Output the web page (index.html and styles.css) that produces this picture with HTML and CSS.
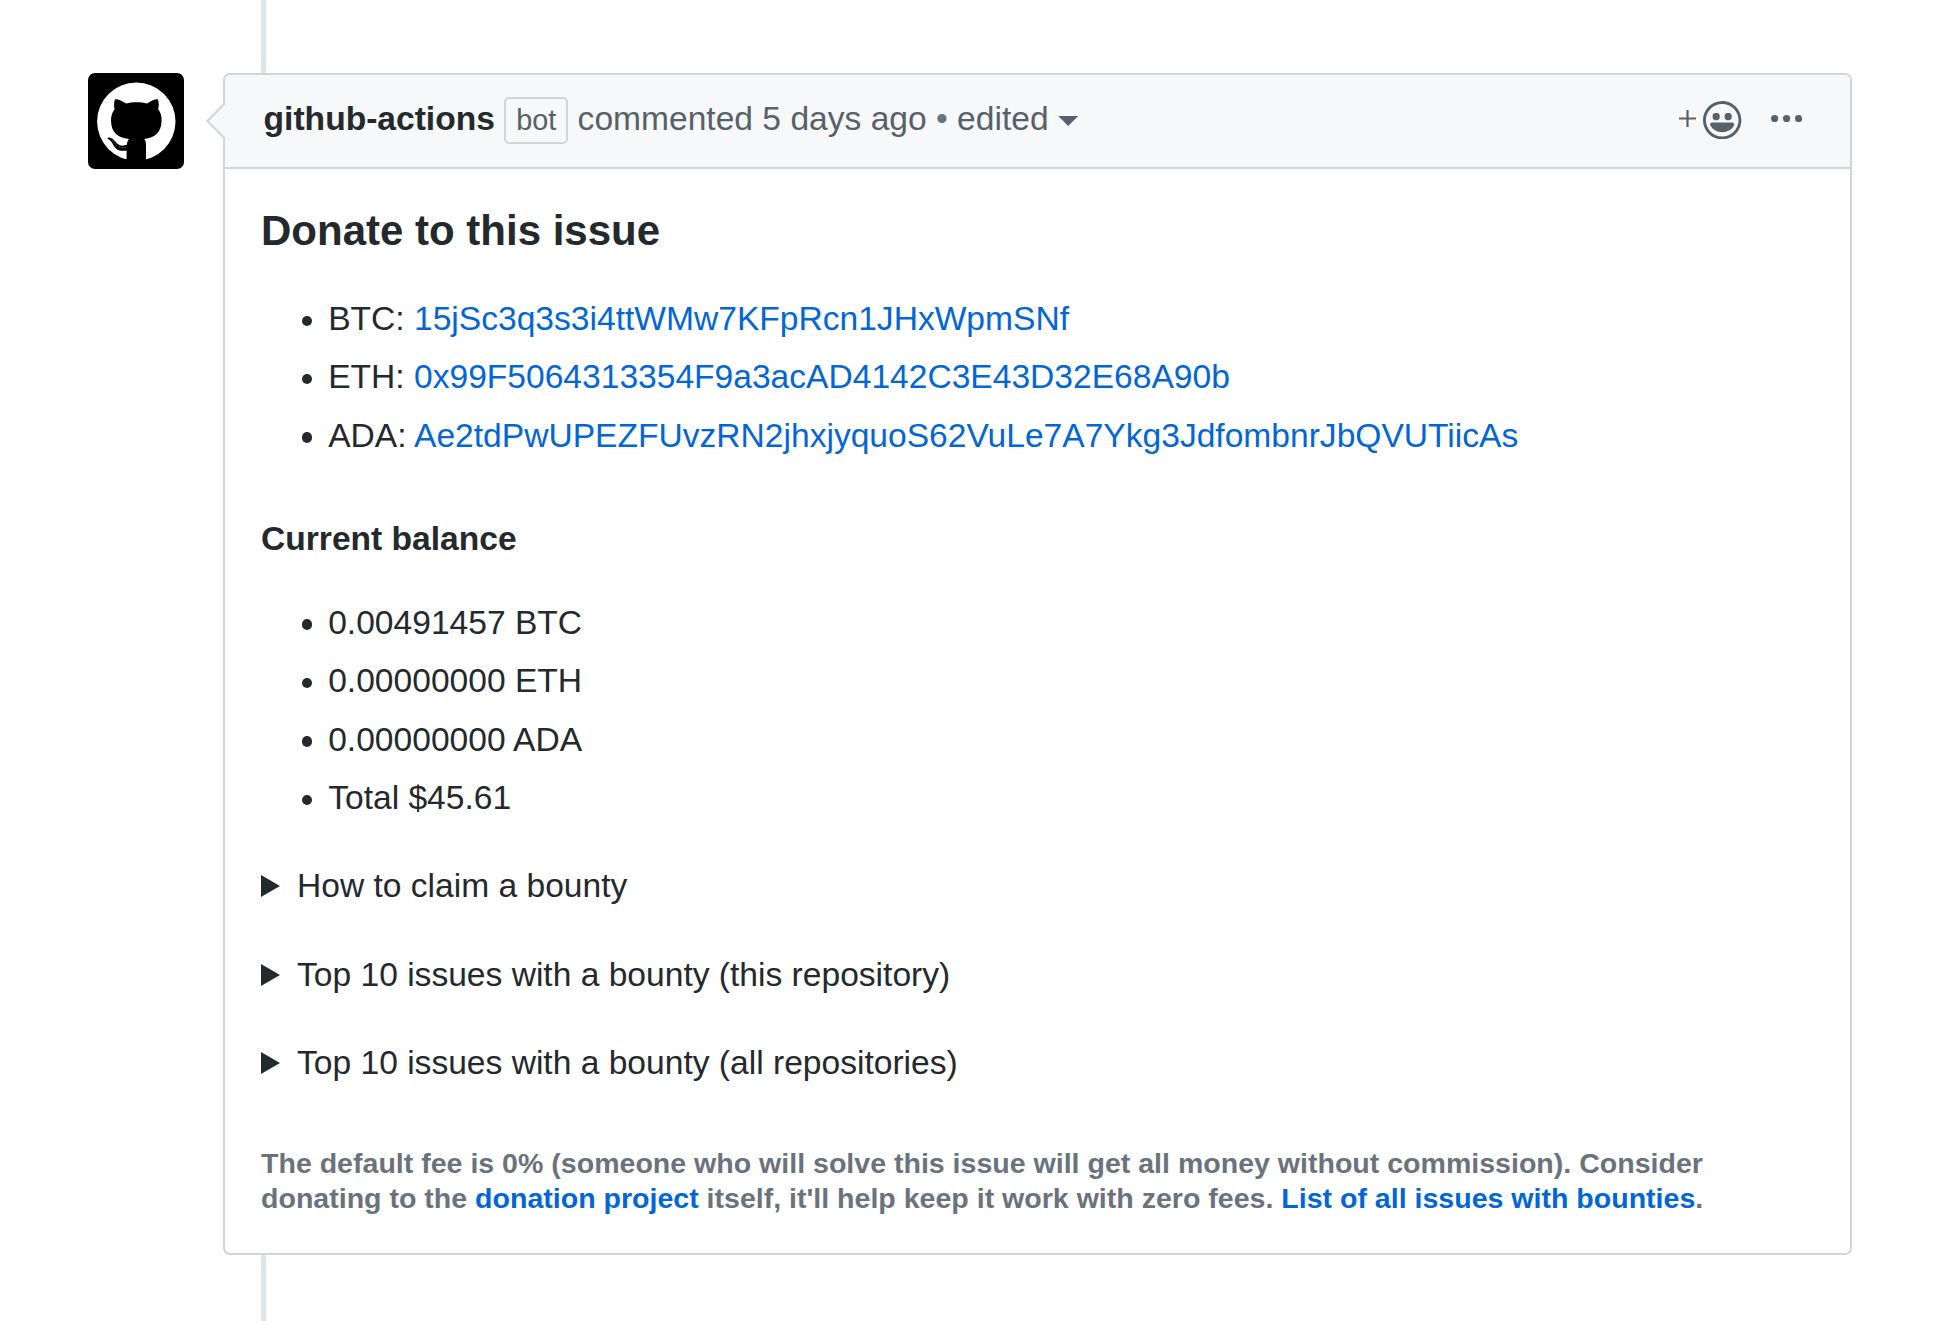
FILE: index.html
```html
<!DOCTYPE html>
<html lang="en">
<head>
<meta charset="utf-8">
<title>Issue comment</title>
<link rel="stylesheet" href="styles.css">
</head>
<body>
<main class="timeline">
  <a class="avatar" aria-label="github-actions">
    <svg viewBox="0 0 96 96" width="96" height="96">
      <rect width="96" height="96" fill="#000"/>
      <circle cx="48.3" cy="48.6" r="39.2" fill="#fff"/>
      <path d="M27 26.2C30.500 26 34.500 28 38 30.600C44.500 28.700 52.500 28.700 59 30.600C62.500 28 66.500 26 69.800 26.200C71 29.500 71 33 70.200 36.300C72.600 39.500 73.700 43 73.600 47.500C73.400 59.500 67 64.500 56.300 66C57.600 67.500 58 69.500 58 72V96H38.600V77.500C30.500 78.800 27.500 76 25.300 72C23.900 69.300 22.300 67.200 19.700 65.800C19.300 64.500 20.800 64.300 22.400 64.700C25.500 65.600 27.200 68.300 28.900 70.300C31.500 73.100 35 73.100 38.900 71.800C39.100 69.400 39.700 67.500 41 66C29.500 64.500 23.200 59.500 23 47.500C23 43 24.200 39.500 26.600 36.300C25.800 33 25.800 29.500 27 26.200Z" fill="#000"/>
      <path d="M24.500 67.500L28.500 72.600L33 74.500L38.500 74.500" fill="none" stroke="#aaa" stroke-width=".8" stroke-dasharray="1 2"/>
      <path d="M36 86.300H60V96H36Z" fill="#000"/>
    </svg>
  </a>
  <article class="comment">
    <svg class="comment-arrow" viewBox="0 0 20 38" width="20" height="38">
      <path d="M20 0L1.400 19L20 38Z" fill="#f6f8fa"/>
      <path d="M18.700 1.500L1.400 19L18.700 36.500" fill="none" stroke="#d1d5da" stroke-width="2"/>
    </svg>
    <header class="comment-header">
      <h3 class="comment-title"><strong class="author">github-actions</strong> <span class="label">bot</span> commented 5 days ago <span class="dot">•</span> edited<i class="caret"></i></h3>
      <div class="actions">
        <svg viewBox="0 0 17 17" width="17" height="17" class="plus"><path d="M8.500 0V17M0 8.500H17" stroke="currentColor" stroke-width="2.200"/></svg>
        <svg viewBox="0 0 16 16" width="38.4" height="38.4" class="smiley"><path fill="currentColor" fill-rule="evenodd" d="M8 0C3.580 0 0 3.580 0 8s3.580 8 8 8 8-3.580 8-8-3.580-8-8-8zm4.810 12.810a6.720 6.720 0 01-2.170 1.450c-.83.36-1.720.53-2.640.53-.92 0-1.810-.17-2.640-.53-.81-.34-1.550-.83-2.170-1.450a6.773 6.773 0 01-1.450-2.170A6.590 6.590 0 011.210 8c0-.92.17-1.810.53-2.640.34-.81.83-1.550 1.450-2.170.62-.62 1.360-1.110 2.170-1.450A6.590 6.590 0 018 1.210c.92 0 1.810.17 2.640.53.81.34 1.550.83 2.170 1.450.62.62 1.110 1.360 1.450 2.170.36.83.53 1.720.53 2.640 0 .92-.17 1.810-.53 2.640-.34.81-.83 1.550-1.450 2.170zM4 6.800v-.59c0-.66.53-1.190 1.200-1.190h.59c.66 0 1.190.53 1.190 1.190v.59c0 .67-.53 1.200-1.190 1.200H5.200C4.530 8 4 7.470 4 6.800zm5 0v-.59c0-.66.53-1.190 1.200-1.190h.59c.66 0 1.190.53 1.190 1.190v.59c0 .67-.53 1.200-1.190 1.200h-.59C9.530 8 9 7.470 9 6.800zm4 3.200c-.72 1.880-2.910 3-5 3s-4.280-1.130-5-3c-.14-.39.23-1 .66-1h8.590c.41 0 .89.61.75 1z"/></svg>
        <svg viewBox="0 0 13 3" width="31.200" height="7.200" class="kebab" fill="currentColor"><circle cx="1.500" cy="1.500" r="1.500"/><circle cx="6.500" cy="1.500" r="1.500"/><circle cx="11.500" cy="1.500" r="1.500"/></svg>
      </div>
    </header>
    <div class="comment-body">
      <h3 class="heading">Donate to this issue</h3>
      <ul class="list">
        <li>BTC: <a class="link">15jSc3q3s3i4ttWMw7KFpRcn1JHxWpmSNf</a></li>
        <li>ETH: <a class="link">0x99F5064313354F9a3acAD4142C3E43D32E68A90b</a></li>
        <li>ADA: <a class="link">Ae2tdPwUPEZFUvzRN2jhxjyquoS62VuLe7A7Ykg3JdfombnrJbQVUTiicAs</a></li>
      </ul>
      <h4 class="subheading">Current balance</h4>
      <ul class="list">
        <li>0.00491457 BTC</li>
        <li>0.00000000 ETH</li>
        <li>0.00000000 ADA</li>
        <li>Total $45.61</li>
      </ul>
      <details class="details"><summary>How to claim a bounty</summary></details>
      <details class="details"><summary>Top 10 issues with a bounty (this repository)</summary></details>
      <details class="details"><summary>Top 10 issues with a bounty (all repositories)</summary></details>
      <h6 class="note">The default fee is 0% (someone who will solve this issue will get all money without commission). Consider donating to the <a class="link">donation project</a> itself, it'll help keep it work with zero fees. <a class="link">List of all issues with bounties</a>.</h6>
    </div>
  </article>
</main>
</body>
</html>
```
FILE: styles.css
```css
* { box-sizing: border-box; }

body {
  margin: 0;
  background: #fff;
  color: #24292e;
  font: 33.6px/50px "Liberation Sans", Arial, sans-serif;
}

h3, h4, h6, ul { margin: 0; }

svg { display: block; flex: none; }

/* The thread line runs behind the comment card */
.timeline {
  display: flex;
  align-items: flex-start;
  gap: 39px;
  height: 1321px;
  padding: 73px 91px 0 88px;
  overflow: hidden;
  background: linear-gradient(#e1e4e8, #e1e4e8) 261px 0 / 5px 100% no-repeat;
}

.avatar {
  flex: none;
  border-radius: 7px;
  overflow: hidden;
}

.comment {
  position: relative;
  flex: 1;
  height: 1182px;
  border: 2px solid #d1d5da;
  border-radius: 7px;
  background: #fff;
}

.comment-arrow {
  position: absolute;
  left: -19.5px;
  top: 27px;
}

.comment-header {
  display: flex;
  align-items: center;
  justify-content: space-between;
  height: 94px;
  padding: 0 48px 0 38.6px;
  border-bottom: 2px solid #d1d5da;
  border-radius: 5px 5px 0 0;
  background: #f6f8fa;
  color: #586069;
}

.comment-title {
  padding-bottom: 4px;
  font-size: 33.6px;
  font-weight: 400;
  line-height: 50px;
  white-space: nowrap;
}

.author { color: #24292e; }

.label {
  display: inline-block;
  padding: 0 10px;
  border: 2px solid #d3d6d9;
  border-radius: 5px;
  font-size: 28.8px;
  line-height: 43px;
}

.dot { color: #6a737d; }

.caret {
  display: inline-block;
  width: 20px;
  height: 10px;
  margin-left: 9.6px;
  vertical-align: 4px;
  background: currentColor;
  clip-path: polygon(0 0, 100% 0, 50% 100%);
}

.actions {
  display: flex;
  align-items: center;
}

.plus { margin-top: -5px; }
.smiley { margin: -2px 29px 0 7px; }
.kebab { margin-top: -5px; }

.comment-body { padding: 36px; }

.heading {
  margin-bottom: 37px;
  font-size: 42px;
  line-height: 52px;
}

.list {
  padding-left: 67.2px;
  margin-bottom: 38.4px;
  list-style: none;
}

.list li + li { margin-top: 8.4px; }

.list li::before {
  content: "";
  display: inline-block;
  width: 10.4px;
  height: 10.4px;
  margin: 0 16px 0 -26.4px;
  border-radius: 50%;
  background: currentColor;
  vertical-align: 4px;
}

.link { color: #0366d6; }

.subheading {
  margin: 57.6px 0 37.4px;
  font-size: 33.6px;
  line-height: 42px;
}

.details { margin-bottom: 38.4px; }

.details summary {
  display: flex;
  align-items: center;
  gap: 17px;
  list-style: none;
}

.details summary::before {
  content: "";
  border: 11px solid transparent;
  border-left: 19px solid currentColor;
  border-right: 0;
}

.note {
  margin-top: 57.6px;
  color: #6a737d;
  font-size: 28.56px;
  line-height: 35.7px;
}
```
